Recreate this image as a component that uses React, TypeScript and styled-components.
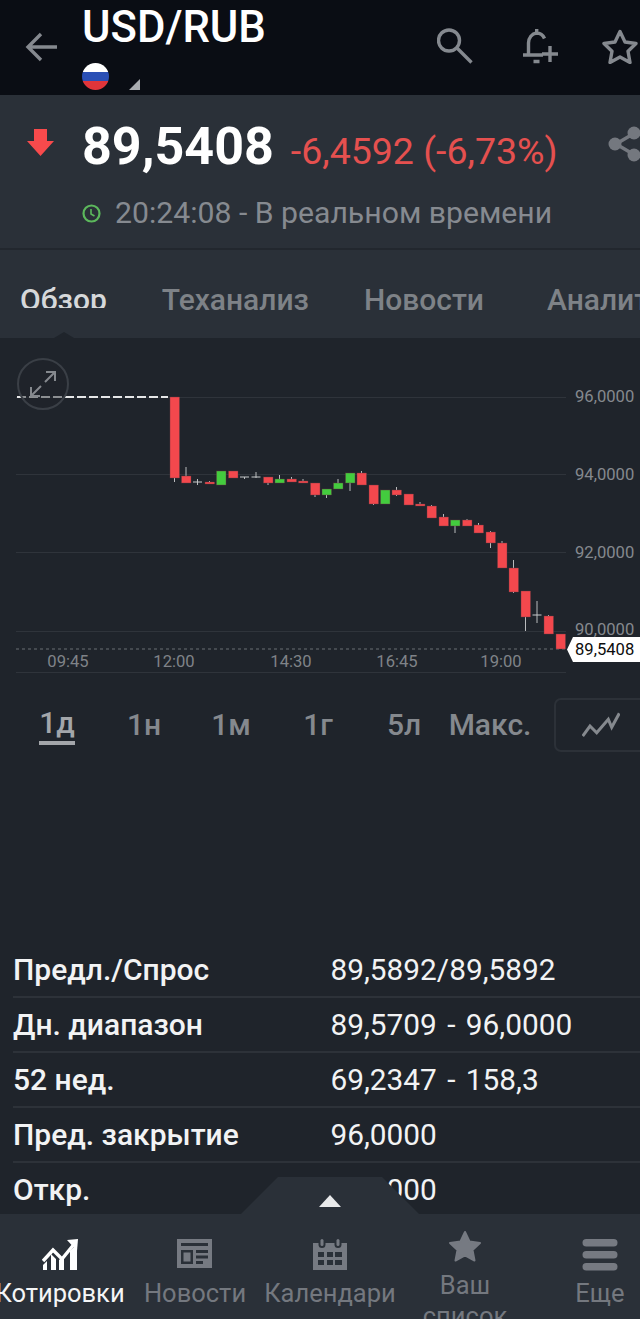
import styled, { createGlobalStyle } from 'styled-components'

const Reset = createGlobalStyle`
  html, body { margin: 0; padding: 0; background: #1f242b; overflow: hidden; }
  * { box-sizing: border-box; }
`

const Screen = styled.div`
  width: 640px;
  height: 1319px;
  display: flex;
  flex-direction: column;
  overflow: hidden;
  font-family: Roboto, 'Noto Sans', sans-serif;
  background: #1f242b;
`

const Header = styled.header`
  height: 95px;
  flex: none;
  display: flex;
  background: #0a0d14;
  padding-left: 22px;
`

const BackSlot = styled.div`
  width: 60px;
  padding: 31px 0 0 3px;
`

const TitleBox = styled.div`
  flex: 1;
`

const Title = styled.h1`
  margin: 5px 0 0;
  font-size: 43.6px;
  line-height: 46px;
  font-weight: 500;
  color: #fff;
`

const FlagRow = styled.div`
  display: flex;
  align-items: flex-end;
  gap: 20px;
  margin-top: 12px;
`

const Flag = styled.span`
  width: 27px;
  height: 27px;
  border-radius: 50%;
  background: linear-gradient(#fff 0 33%, #2a4fb5 33% 66%, #e0353a 66%);
`

const Corner = styled.span`
  width: 11px;
  height: 11px;
  background: #a9acb0;
  clip-path: polygon(100% 0, 100% 100%, 0 100%);
`

const HeaderIcons = styled.div`
  display: grid;
  grid-template-columns: 86px 79px 36px;
  padding-top: 28px;
  margin-right: 2px;
  align-items: start;
`

const HeaderIcon = styled.svg`
  width: 36px;
  height: 36px;
  fill: none;
  stroke: #85898f;
  stroke-width: 3.4;
`

const Quote = styled.section`
  height: 155px;
  flex: none;
  background: #2a3038;
  border-bottom: 2px solid #22272e;
  padding: 27px 0 0 27px;
  position: relative;
`

const PriceRow = styled.div`
  display: flex;
  align-items: baseline;
`

const DownArrow = styled.svg`
  width: 27px;
  height: 27px;
  align-self: flex-start;
  margin: 7px 28px 0 0;
`

const Price = styled.span`
  font-size: 52px;
  line-height: 50px;
  font-weight: 700;
  color: #fff;
`

const Change = styled.span`
  font-size: 37.5px;
  color: #e5504f;
  margin-left: 17px;
  white-space: nowrap;
`

const ShareIcon = styled.svg`
  position: absolute;
  left: 608px;
  top: 31px;
  width: 34px;
  height: 36px;
`

const TimeRow = styled.div`
  display: flex;
  align-items: center;
  gap: 14px;
  margin: 22px 0 0 55px;
  font-size: 30.2px;
  line-height: 36px;
  color: #868a90;
  white-space: nowrap;
`

const TabBar = styled.nav`
  height: 88px;
  flex: none;
  background: #2a3038;
  position: relative;
`

const TabRow = styled.div`
  display: flex;
  gap: 55px;
  padding: 32px 0 0 20px;
  white-space: nowrap;
  align-items: flex-start;
`

// the active label is cut off at its foot in the app
const Tab = styled.span<{ $active?: boolean; $far?: boolean }>`
  flex: none;
  font-size: 30px;
  line-height: 36px;
  font-weight: 500;
  margin-left: ${p => (p.$far ? 8 : 0)}px;
  height: ${p => (p.$active ? '26px' : '36px')};
  overflow: hidden;
  color: ${p => (p.$active ? '#d6d8da' : '#7e8287')};
`

const TabPointer = styled.span`
  position: absolute;
  left: 54px;
  bottom: 0;
  width: 20px;
  height: 6px;
  background: #1f242b;
  clip-path: polygon(50% 0, 100% 100%, 0 100%);
`

const Main = styled.main`
  flex: 1;
  min-height: 0;
  overflow: hidden;
  background: #1f242b;
`

const ChartBox = styled.div`
  height: 352px;
  position: relative;
`

const ExpandBtn = styled.div`
  position: absolute;
  left: 17px;
  top: 20px;
  width: 52px;
  height: 52px;
  border-radius: 50%;
  border: 2px solid #3a3f46;
  display: flex;
  align-items: center;
  justify-content: center;
  background: rgba(31, 36, 43, 0.45);
`

const PriceTag = styled.div`
  position: absolute;
  left: 567px;
  top: 299px;
  width: 73px;
  height: 25px;
  padding-left: 8px;
  background: #fff;
  color: #0c0c0c;
  font-size: 16.6px;
  line-height: 25px;
  clip-path: polygon(6px 0, 100% 0, 100% 100%, 6px 100%, 0 50%);
`

const RangeRow = styled.div`
  display: flex;
  height: 54px;
  margin-top: 8px;
  align-items: center;
  position: relative;
`

const RangeItem = styled.span<{ $w: number }>`
  width: ${p => p.$w}px;
  flex: none;
  display: flex;
  justify-content: center;
  font-size: 30px;
  font-weight: 500;
  white-space: nowrap;
`

const RangeLabel = styled.span<{ $active?: boolean }>`
  display: inline-block;
  line-height: 36px;
  color: ${p => (p.$active ? '#a3a6aa' : '#85898e')};
  border-bottom: ${p => (p.$active ? '4px solid #a3a6aa' : 'none')};
`

const ChartType = styled.div`
  position: absolute;
  left: 554px;
  top: 0;
  width: 110px;
  height: 54px;
  border: 2px solid #2c3138;
  border-radius: 7px;
  padding: 12px 0 0 26px;
`

const Stats = styled.div`
  margin-top: 191px;
  padding-left: 13px;
`

const StatRow = styled.div`
  display: grid;
  grid-template-columns: 317.500px 1fr;
  height: 55px;
  align-items: center;
  border-bottom: 2px solid #2d3239;
  font-size: 30px;
  white-space: nowrap;
  color: #f2f3f4;
`

const StatName = styled.span`
  font-weight: 500;
`

const StatValue = styled.span`
  font-size: 29.8px;
  word-spacing: 3px;
`

const BottomNav = styled.footer`
  height: 105px;
  flex: none;
  background: #2a3038;
  position: relative;
  display: grid;
  grid-template-columns: repeat(5, 135px);
  width: 675px;
  margin-left: -7.5px;
`

const Bump = styled.div`
  position: absolute;
  left: 247.5px;
  top: -37px;
  width: 180px;
  height: 38px;
  background: #2a3038;
  clip-path: polygon(0 100%, 38px 0, 142px 0, 100% 100%);
  display: flex;
  justify-content: center;
  padding-top: 18px;
`

const BumpArrow = styled.span`
  width: 22px;
  height: 12px;
  background: #e8e9ea;
  clip-path: polygon(50% 0, 100% 100%, 0 100%);
`

const NavItem = styled.div<{ $active?: boolean; $raised?: boolean }>`
  display: flex;
  flex-direction: column;
  align-items: center;
  padding-top: ${p => (p.$raised ? 16 : 25)}px;
  color: ${p => (p.$active ? '#fff' : '#767a82')};
  text-align: center;
`

const NavIcon = styled.svg`
  width: 36px;
  height: 32px;
  flex: none;
`

const NavLabel = styled.span<{ $active?: boolean; $raised?: boolean }>`
  font-size: 25.5px;
  line-height: 31px;
  margin-top: ${p => (p.$raised ? 7.5 : 6.5)}px;
  white-space: ${p => (p.$raised ? 'normal' : 'nowrap')};
  width: ${p => (p.$raised ? '90px' : 'auto')};
  color: ${p => (p.$active ? '#f4f5f6' : '#74787f')};
`

// x, body top, body bottom, wick top, wick bottom, kind
type Candle = [number, number, number, number, number, 'r' | 'g' | 'x']

const candles: Candle[] = [
  [174.5, 397, 478, 397, 482, 'r'],
  [186, 476, 483, 467, 483, 'r'],
  [197.5, 482, 483, 479, 485, 'x'],
  [209.5, 482, 484, 481, 484, 'r'],
  [221, 471, 485, 471, 485, 'g'],
  [233, 471, 478, 471, 478, 'r'],
  [244.5, 477, 478, 477, 479, 'x'],
  [256, 477, 478, 472, 478, 'x'],
  [268, 477, 483, 477, 485, 'r'],
  [279.5, 479, 483, 475, 483, 'g'],
  [291.5, 479, 482, 477, 482, 'r'],
  [303, 481, 483, 479, 483, 'r'],
  [315, 483, 495, 483, 497, 'r'],
  [326.5, 489, 495, 489, 498, 'g'],
  [338, 483, 489, 479, 489, 'g'],
  [350, 473, 483, 473, 491, 'g'],
  [361.5, 473, 485, 471, 485, 'r'],
  [373.5, 485, 504, 485, 505, 'r'],
  [385, 490, 504, 490, 504, 'g'],
  [396.5, 490, 495, 487, 496, 'r'],
  [408.5, 494, 505, 494, 505, 'r'],
  [420, 504, 506, 502, 506, 'r'],
  [431.5, 506, 518, 505, 518, 'r'],
  [443.5, 517, 526, 514, 526, 'r'],
  [455, 520, 526, 520, 533, 'g'],
  [467, 520, 526, 519, 526, 'r'],
  [478.5, 525, 533, 523, 533, 'r'],
  [490.5, 532, 543, 531, 548, 'r'],
  [502, 543, 568, 541, 568, 'r'],
  [513.5, 568, 592, 560, 593, 'r'],
  [525.5, 591, 617, 591, 631, 'r'],
  [537, 615, 616, 601, 623, 'x'],
  [548.5, 616, 634, 615, 634, 'r'],
  [560.5, 634, 649, 634, 649, 'r'],
]

const gridLines = [397.5, 474.5, 552.5, 631.5, 672.5]
const yLabels = [
  ['96,0000', 402],
  ['94,0000', 480],
  ['92,0000', 558],
  ['90,0000', 635],
] as const
const xLabels = [
  ['09:45', 68],
  ['12:00', 174],
  ['14:30', 291],
  ['16:45', 397],
  ['19:00', 501],
] as const

const stats = [
  ['Предл./Спрос', '89,5892/89,5892'],
  ['Дн. диапазон', '89,5709 - 96,0000'],
  ['52 нед.', '69,2347 - 158,3'],
  ['Пред. закрытие', '96,0000'],
  ['Откр.', '96,0000'],
]

const ranges: [string, number][] = [
  ['1д', 114],
  ['1н', 60],
  ['1м', 114],
  ['1г', 60],
  ['5л', 112],
  ['Макс.', 60],
]

function Chart() {
  // svg coordinates follow the page, so shift up by the chart's top
  return (
    <svg width="640" height="352" viewBox="0 338 640 352">
      {gridLines.map(y => (
        <line key={y} x1="16" x2="566" y1={y} y2={y} stroke="#2f343b" strokeWidth="1" />
      ))}
      <line x1="17" x2="168" y1="397" y2="397" stroke="#e6e7e8" strokeWidth="2" strokeDasharray="9 3" />
      <line x1="16" x2="566" y1="649" y2="649" stroke="#6a6e74" strokeWidth="1" strokeDasharray="3 3" />
      {candles.map(([x, top, bottom, wickTop, wickBottom, kind]) => {
        const fill = kind === 'g' ? '#43cc3e' : '#f3484d'
        return (
          <g key={x}>
            <line x1={x} x2={x} y1={wickTop} y2={wickBottom} stroke="#b9bbbd" strokeWidth="1" />
            {kind === 'x' ? (
              <line x1={x - 4.5} x2={x + 4.5} y1={top} y2={top} stroke="#c9cbcd" strokeWidth="1" />
            ) : (
              <rect x={x - 4.5} y={top} width="9.5" height={bottom - top} fill={fill} stroke="#6a3a40" strokeWidth="0.4" />
            )}
          </g>
        )
      })}
      {yLabels.map(([text, y]) => (
        <text key={text} x="575" y={y} fontSize="16.6" fill="#85898e" fontFamily="Roboto">
          {text}
        </text>
      ))}
      {xLabels.map(([text, x]) => (
        <text key={text} x={x} y="667" fontSize="16.6" fill="#7f8388" textAnchor="middle" fontFamily="Roboto">
          {text}
        </text>
      ))}
    </svg>
  )
}

export default function App() {
  return (
    <Screen>
      <Reset />
      <Header>
        <BackSlot>
          <svg width="32" height="32" viewBox="0 0 32 32" fill="none" stroke="#85898f" strokeWidth="3.4">
            <path d="M32 16H3M16 3 3 16l13 13" />
          </svg>
        </BackSlot>
        <TitleBox>
          <Title>USD/RUB</Title>
          <FlagRow>
            <Flag />
            <Corner />
          </FlagRow>
        </TitleBox>
        <HeaderIcons>
          <HeaderIcon viewBox="0 0 36 36">
            <circle cx="12" cy="12.5" r="10.5" />
            <path d="m20 20 14.500 14.500" />
          </HeaderIcon>
          <HeaderIcon viewBox="0 0 36 36">
            <path d="M5.500 26V15c0-5 3.500-9.500 8-10 3.500 0 6.500 2 8 5.500M13.700 1v4M0 27h20M10.500 33.500h6" />
            <path d="M27 18v16M19 26h16" />
          </HeaderIcon>
          <HeaderIcon viewBox="0 0 36 36">
            <path d="M18 3.500 23 14l11 1.500-8 7.800 2 11.200-10-5.500-10 5.500 2-11.200-8-7.800L13 14z" strokeLinejoin="round" />
          </HeaderIcon>
        </HeaderIcons>
      </Header>

      <Quote>
        <PriceRow>
          <DownArrow viewBox="0 0 27 27">
            <path d="M7 0h13v12h7L13.500 27 0 12h7z" fill="#f84a4c" />
          </DownArrow>
          <Price>89,5408</Price>
          <Change>-6,4592 (-6,73%)</Change>
        </PriceRow>
        <ShareIcon viewBox="0 0 34 36">
          <path d="M25 8 8 18l17 10" fill="none" stroke="#74787f" strokeWidth="3.5" />
          <circle cx="26" cy="7" r="6.5" fill="#74787f" />
          <circle cx="7" cy="18" r="6.5" fill="#74787f" />
          <circle cx="26" cy="29" r="6.5" fill="#74787f" />
        </ShareIcon>
        <TimeRow>
          <svg width="19" height="19" viewBox="0 0 19 19">
            <circle cx="9.5" cy="9.5" r="8" fill="none" stroke="#5cb85c" strokeWidth="2.2" />
            <path d="M9 5v5l3.5 2" fill="none" stroke="#5cb85c" strokeWidth="1.6" />
          </svg>
          20:24:08 - В реальном времени
        </TimeRow>
      </Quote>

      <TabBar>
        <TabRow>
          <Tab $active>Обзор</Tab>
          <Tab>Теханализ</Tab>
          <Tab>Новости</Tab>
          <Tab $far>Аналитика</Tab>
        </TabRow>
        <TabPointer />
      </TabBar>

      <Main>
        <ChartBox>
          <Chart />
          <ExpandBtn>
            <svg width="28" height="28" viewBox="0 0 28 28" fill="none" stroke="#85898e" strokeWidth="2">
              <path d="M16 12 26 2M17 2h9v9M12 16 2 26M2 17v9h9" />
            </svg>
          </ExpandBtn>
          <PriceTag>89,5408</PriceTag>
        </ChartBox>

        <RangeRow>
          {ranges.map(([text, width], i) => (
            <RangeItem key={text} $w={width}>
              <RangeLabel $active={i === 0}>{text}</RangeLabel>
            </RangeItem>
          ))}
          <ChartType>
            <svg width="38" height="26" viewBox="0 0 38 26" fill="none" stroke="#85898e" strokeWidth="3">
              <path d="m.7 24 7.300-10 6.700 6.700L26.300 7.300l3.400 8 7.600-14" />
            </svg>
          </ChartType>
        </RangeRow>

        <Stats>
          {stats.map(([name, value]) => (
            <StatRow key={name}>
              <StatName>{name}</StatName>
              <StatValue>{value}</StatValue>
            </StatRow>
          ))}
        </Stats>
      </Main>

      <BottomNav>
        <Bump>
          <BumpArrow />
        </Bump>
        <NavItem $active>
          <NavIcon viewBox="0 0 36 32" fill="currentColor">
            <path d="M1 31v-5l4-4v9zM9 31V15l5 5v11zM17 31V21l5-5v15zM28 31V12l7-7v26z" />
            <path d="m1 22 10-11 9 9L33 4" fill="none" stroke="currentColor" strokeWidth="3.4" />
            <path d="m25 1 11-1-1 12z" />
          </NavIcon>
          <NavLabel $active>Котировки</NavLabel>
        </NavItem>
        <NavItem>
          <NavIcon viewBox="0 0 36 32">
            <path
              fillRule="evenodd"
              d="M0 0h35v29H0zM4 4v3h27V4zM4 11v14h12V11zm2.500 2.500h7v9h-7zM19 11v3h12v-3zm0 5.500v3h12v-3zm0 5.500v3h7v-3z"
              fill="currentColor"
            />
          </NavIcon>
          <NavLabel>Новости</NavLabel>
        </NavItem>
        <NavItem>
          <NavIcon viewBox="0 0 36 32">
            <path
              fillRule="evenodd"
              d="M1 4h34v27H1zM6 13v5h6v-5zm9 0v5h6v-5zm8 0v5h7v-5zM6 21v5h6v-5zm9 0v5h6v-5zm8 0v5h7v-5z"
              fill="currentColor"
            />
            <rect x="6.5" y="0" width="7" height="9" rx="3.5" fill="#2a3038" />
            <rect x="8.5" y="0" width="3" height="7" rx="1.5" fill="currentColor" />
            <rect x="22.5" y="0" width="7" height="9" rx="3.5" fill="#2a3038" />
            <rect x="24.5" y="0" width="3" height="7" rx="1.5" fill="currentColor" />
          </NavIcon>
          <NavLabel>Календари</NavLabel>
        </NavItem>
        <NavItem $raised>
          <NavIcon viewBox="0 0 36 32">
            <path
              d="m18 2 4.500 9.500 10.500 1.500-7.500 7 2 10.500-9.500-5.200L8.500 30.500l2-10.500-7.500-7 10.500-1.500z"
              fill="currentColor"
              stroke="currentColor"
              strokeWidth="2"
              strokeLinejoin="round"
            />
          </NavIcon>
          <NavLabel $raised>Ваш список</NavLabel>
        </NavItem>
        <NavItem>
          <NavIcon viewBox="0 0 36 32" fill="currentColor">
            <rect x="0.5" y="0" width="35" height="7.5" rx="3.75" />
            <rect x="0.5" y="12" width="35" height="7.5" rx="3.75" />
            <rect x="0.5" y="24" width="35" height="7.5" rx="3.75" />
          </NavIcon>
          <NavLabel>Еще</NavLabel>
        </NavItem>
      </BottomNav>
    </Screen>
  )
}
